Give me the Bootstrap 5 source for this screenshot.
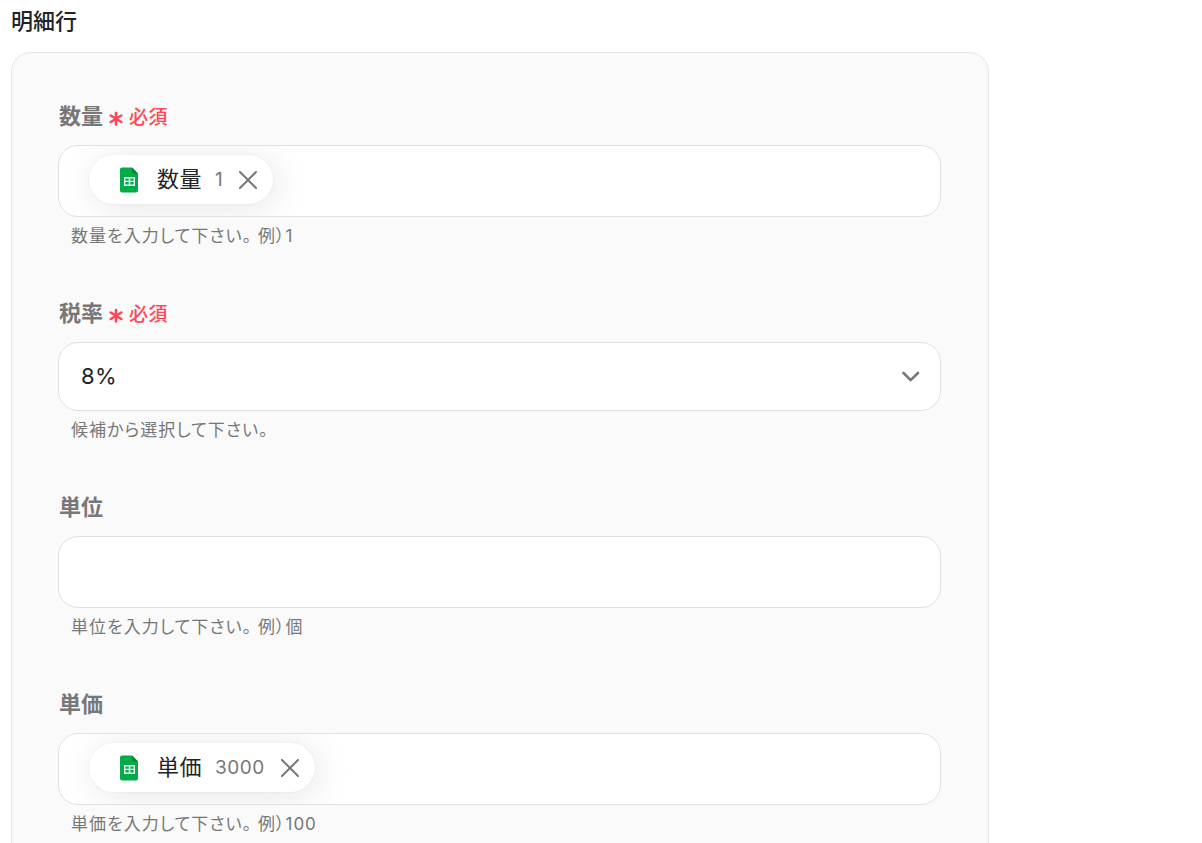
<!DOCTYPE html>
<html lang="ja">
<head>
<meta charset="utf-8">
<meta name="viewport" content="width=device-width, initial-scale=1">
<title>明細行</title>
<link href="https://cdn.jsdelivr.net/npm/bootstrap@5.3.0/dist/css/bootstrap.min.css" rel="stylesheet">
<style>
  body {
    font-family: Inter, "Noto Sans CJK JP", sans-serif;
    font-size: 22px;
    line-height: 33px;
    color: #222325;
    background: #fff;
    font-feature-settings: "palt";
    letter-spacing: 0.02em;
  }
  .page { padding: 5px 11px 0; }
  .form-column { max-width: 978px; }
  .section-title { font-size: 22px; line-height: 32px; font-weight: 500; margin-bottom: 15px; letter-spacing: 0; }
  .panel { background: #fafafa; border: 1px solid #e4e5e7; border-radius: 20px; padding: 47px 47px 48px 46px; gap: 48px; }
  .field-label { color: #777; font-weight: 700; letter-spacing: 0; }
  .label-row { gap: 6px; margin-bottom: 12px; padding-left: 1px; }
  .required { color: #ff4757; font-size: 19px; line-height: 31px; font-weight: 500; gap: 6px; padding-top: 2px; }
  .control { border: 1px solid #dfe0e4; border-radius: 20px; background: #fff; font-size: 22px; color: #222325; letter-spacing: inherit; }
  .control:focus, .control:focus-within { border-color: #a9adb5; box-shadow: none; outline: 0; }
  .text-control { height: 72px; }
  .tag-control { padding: 9px 22px 0 30px; gap: 8px; }
  .tag-control input { min-width: 40px; height: 49px; outline: 0; }
  .select-wrap svg { right: 21px; top: 50%; margin-top: -6px; pointer-events: none; }
  select.control { height: 69px; padding: 0 48px 0 22px; background-image: none; }
  .help { color: #777; font-size: 17px; line-height: 26px; margin-top: 6px; padding-left: 13px; letter-spacing: 0.06em; }
  .chip { height: 49px; border-radius: 25px; padding: 0 16px 0 31px; background: #fff; box-shadow: 0 0 2px rgba(0,0,0,.08), 4px 4px 36px rgba(0,0,0,.1); }
  .chip-name { margin-left: 19px; }
  .chip-value { margin-left: 13px; font-size: 19px; color: #777; letter-spacing: 0.03em; }
  .chip-remove { margin-left: 16px; line-height: 0; }
</style>
</head>
<body>
<main class="page vh-100 overflow-hidden">
  <form class="form-column">
    <h1 class="section-title">明細行</h1>
    <div class="panel d-flex flex-column">

      <div>
        <div class="label-row d-flex align-items-center">
          <label class="field-label" for="quantity">数量</label>
          <span class="required d-flex align-items-center">
            <svg width="14" height="16" viewBox="0 0 14 16" fill="none" stroke="currentColor" stroke-width="2.6" stroke-linecap="round" aria-hidden="true"><path d="M7 3v11.500M1.700 5.500l10.600 6.500M12.300 5.500L1.700 12"/></svg>
            <span>必須</span>
          </span>
        </div>
        <div class="control text-control tag-control d-flex align-items-start overflow-hidden">
          <span class="chip d-inline-flex align-items-center flex-shrink-0">
            <svg width="18" height="26" viewBox="0 0 18 26" aria-hidden="true"><path fill="#00ac47" d="M2 0.500h10l6 6v17a2 2 0 0 1-2 2H2a2 2 0 0 1-2-2V2.500a2 2 0 0 1 2-2z"/><path fill="#00832d" d="M12 0.500l6 6h-4a2 2 0 0 1-2-2z"/><path fill="#fff" fill-rule="evenodd" d="M4 10h11v9H4zM5.300 11.500v2.200h3.500v-2.200zm4.900 0v2.200h3.500v-2.200zm-4.900 3.600v2.400h3.500v-2.400zm4.900 0v2.400h3.500v-2.400z"/></svg>
            <span class="chip-name">数量</span>
            <span class="chip-value">1</span>
            <button type="button" class="chip-remove border-0 bg-transparent p-0" aria-label="数量を削除"><svg width="18" height="18" viewBox="0 0 18 18" fill="none" stroke="#777" stroke-width="2" stroke-linecap="round"><path d="M1 1l16 16M17 1L1 17"/></svg></button>
          </span>
          <input id="quantity" type="text" class="border-0 bg-transparent flex-grow-1 shadow-none">
        </div>
        <div class="help">数量を入力して下さい。 例）1</div>
      </div>

      <div>
        <div class="label-row d-flex align-items-center">
          <label class="field-label" for="tax">税率</label>
          <span class="required d-flex align-items-center">
            <svg width="14" height="16" viewBox="0 0 14 16" fill="none" stroke="currentColor" stroke-width="2.6" stroke-linecap="round" aria-hidden="true"><path d="M7 3v11.500M1.700 5.500l10.600 6.500M12.300 5.500L1.700 12"/></svg>
            <span>必須</span>
          </span>
        </div>
        <div class="select-wrap position-relative">
          <select id="tax" class="form-select control">
            <option selected>8%</option>
            <option>10%</option>
          </select>
          <svg class="position-absolute" width="18" height="12" viewBox="0 0 18 12" fill="none" stroke="#777" stroke-width="2.600" stroke-linecap="round" stroke-linejoin="round" aria-hidden="true"><path d="M1.500 2l7.200 7.200 7.200-7.200"/></svg>
        </div>
        <div class="help">候補から選択して下さい。</div>
      </div>

      <div>
        <div class="label-row d-flex align-items-center">
          <label class="field-label" for="unit">単位</label>
        </div>
        <input id="unit" type="text" class="form-control control text-control">
        <div class="help">単位を入力して下さい。 例）個</div>
      </div>

      <div>
        <div class="label-row d-flex align-items-center">
          <label class="field-label" for="price">単価</label>
        </div>
        <div class="control text-control tag-control d-flex align-items-start overflow-hidden">
          <span class="chip d-inline-flex align-items-center flex-shrink-0">
            <svg width="18" height="26" viewBox="0 0 18 26" aria-hidden="true"><path fill="#00ac47" d="M2 0.500h10l6 6v17a2 2 0 0 1-2 2H2a2 2 0 0 1-2-2V2.500a2 2 0 0 1 2-2z"/><path fill="#00832d" d="M12 0.500l6 6h-4a2 2 0 0 1-2-2z"/><path fill="#fff" fill-rule="evenodd" d="M4 10h11v9H4zM5.300 11.500v2.200h3.500v-2.200zm4.900 0v2.200h3.500v-2.200zm-4.900 3.600v2.400h3.500v-2.400zm4.900 0v2.400h3.500v-2.400z"/></svg>
            <span class="chip-name">単価</span>
            <span class="chip-value">3000</span>
            <button type="button" class="chip-remove border-0 bg-transparent p-0" aria-label="単価を削除"><svg width="18" height="18" viewBox="0 0 18 18" fill="none" stroke="#777" stroke-width="2" stroke-linecap="round"><path d="M1 1l16 16M17 1L1 17"/></svg></button>
          </span>
          <input id="price" type="text" class="border-0 bg-transparent flex-grow-1 shadow-none">
        </div>
        <div class="help">単価を入力して下さい。 例）100</div>
      </div>

    </div>
  </form>
</main>
<script src="https://cdn.jsdelivr.net/npm/bootstrap@5.3.0/dist/js/bootstrap.bundle.min.js"></script>
</body>
</html>
